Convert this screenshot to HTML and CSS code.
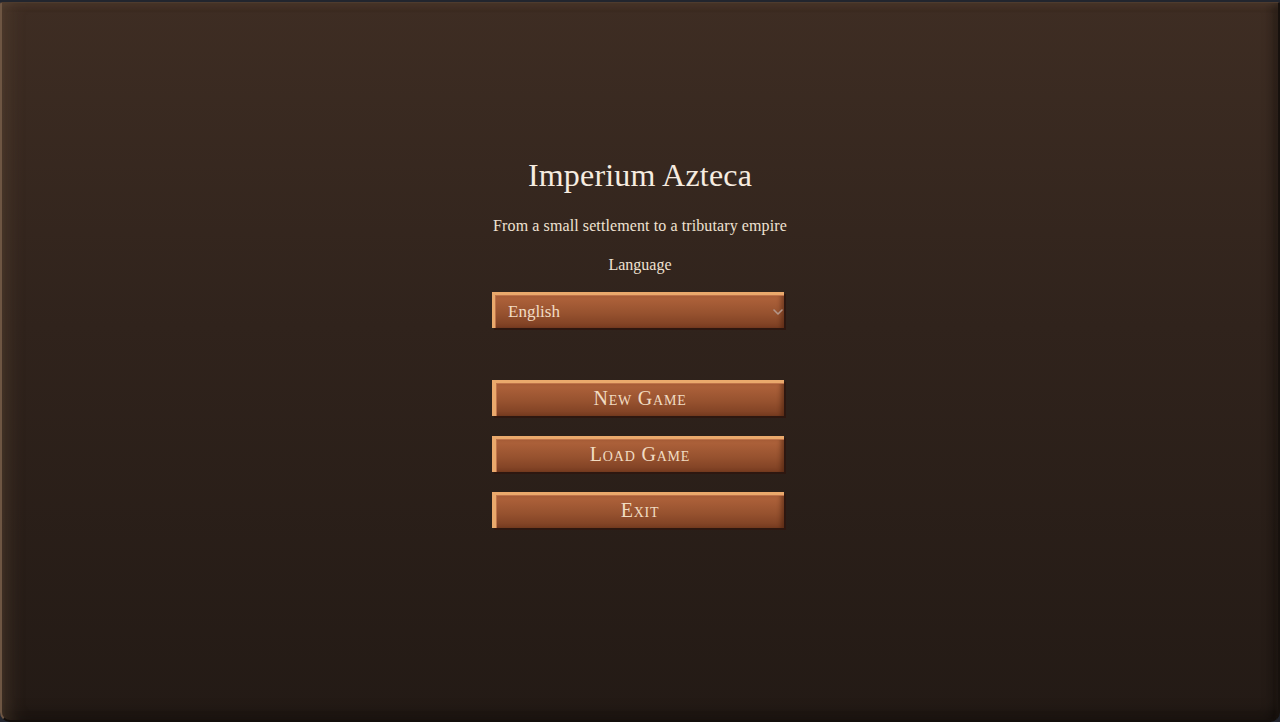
FILE: index.html
```html
<!DOCTYPE html>
<html lang="en">
<head>
<meta charset="utf-8">
<title>Imperium Azteca</title>
<link rel="stylesheet" href="styles.css">
</head>
<body>
<main class="screen">
  <h1 class="title">Imperium Azteca</h1>
  <p class="subtitle">From a small settlement to a tributary empire</p>
  <label class="lang-label" for="lang">Language</label>
  <div class="select-wrap">
    <select id="lang" class="lang-select">
      <option>English</option>
      <option>Español</option>
    </select>
    <svg class="chevron" width="10" height="6" viewBox="0 0 10 6" aria-hidden="true">
      <path d="M1 1 L5 5 L9 1" fill="none" stroke="#b3968a" stroke-width="1.6" stroke-linecap="round" stroke-linejoin="round"/>
    </svg>
  </div>
  <nav class="menu">
    <button class="menu-btn">New Game</button>
    <button class="menu-btn">Load Game</button>
    <button class="menu-btn">Exit</button>
  </nav>
</main>
</body>
</html>
```

FILE: styles.css
```css
html, body {
  margin: 0;
  padding: 0;
  height: 100%;
}

body {
  background: #22252e;
  overflow: hidden;
  padding-top: 2px;
  box-sizing: border-box;
}

.screen {
  box-sizing: border-box;
  height: 720px;
  display: flex;
  flex-direction: column;
  align-items: center;
  padding-top: 152px;
  border-radius: 2px 2px 10px 10px;
  border-top: 1px solid #4e3b2e;
  border-left: 2px solid #6e5643;
  border-right: 2px solid #17110d;
  border-bottom: 2px solid #130e0b;
  background: linear-gradient(180deg, #3e2d23 0%, #30231c 45%, #231a15 100%);
  box-shadow:
    inset 14px 0 18px -10px rgba(120, 95, 72, 0.4),
    inset 0 4px 6px -2px rgba(110, 85, 65, 0.35),
    inset -8px 0 14px -6px rgba(0, 0, 0, 0.45),
    inset 0 -10px 16px -6px rgba(0, 0, 0, 0.45);
  color: #f3e6d6;
  font-family: "Liberation Serif", "DejaVu Serif", serif;
}

.title {
  margin: 0;
  font-size: 32px;
  font-weight: normal;
  line-height: 40px;
  letter-spacing: 0.2px;
  color: #f6ece0;
}

.subtitle {
  margin: 19px 0 0;
  font-size: 16px;
  line-height: 24px;
  letter-spacing: 0.1px;
  color: #efe2d2;
}

.lang-label {
  margin-top: 15px;
  font-size: 16px;
  line-height: 24px;
  color: #efe2d2;
}

.select-wrap {
  position: relative;
  margin: 15px 4px 0 0;
}

.lang-select {
  display: block;
  box-sizing: border-box;
  width: 292px;
  height: 36px;
  padding: 0 24px 0 13px;
  -webkit-appearance: none;
  appearance: none;
  font-family: "Liberation Serif", "DejaVu Serif", serif;
  font-size: 17px;
  color: #f2dcc4;
  border: none;
  border-top: 3px solid #eaa96c;
  border-left: 3px solid #eaa96c;
  border-radius: 0;
  background: linear-gradient(180deg, #b1643c 0%, #97522f 55%, #7b3e22 100%);
  box-shadow:
    inset 1px 1px 0 #c0744a,
    inset -4px 0 4px -1px rgba(60, 25, 10, 0.45),
    2px 2px 0 #2d1710;
  outline: none;
}

.chevron {
  position: absolute;
  right: 1px;
  top: 17px;
  pointer-events: none;
}

.menu {
  margin: 52px 4px 0 0;
  display: flex;
  flex-direction: column;
  gap: 20px;
}

.menu-btn {
  box-sizing: border-box;
  width: 292px;
  height: 36px;
  padding: 0 0 3px;
  border: none;
  border-top: 3px solid #eaa96c;
  border-left: 4px solid #eaa96c;
  border-radius: 0;
  background: linear-gradient(180deg, #b1643c 0%, #97522f 55%, #7b3e22 100%);
  box-shadow:
    inset 1px 1px 0 #c0744a,
    inset -4px 0 4px -1px rgba(60, 25, 10, 0.5),
    2px 2px 0 #2d1710;
  color: #f1dcc2;
  font-family: "Liberation Serif", "DejaVu Serif", serif;
  font-size: 20px;
  font-variant: small-caps;
  letter-spacing: 0.8px;
  line-height: 30px;
  cursor: pointer;
}
```
